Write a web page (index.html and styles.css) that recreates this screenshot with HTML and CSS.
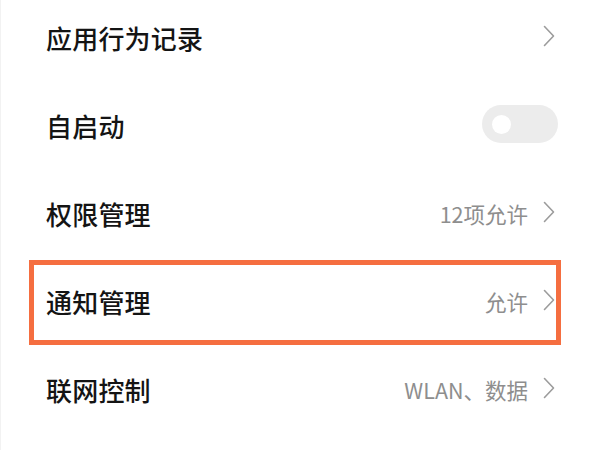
FILE: index.html
```html
<!DOCTYPE html>
<html lang="zh-CN">
<head>
<meta charset="utf-8">
<link rel="stylesheet" href="styles.css">
</head>
<body>
<div class="list">
  <div class="row">
    <span class="label">应用行为记录</span>
    <span class="right">
      <svg class="chev" viewBox="0 0 12 22" width="12" height="22"><polyline points="1.5,1.5 10.5,11 1.5,20.5"/></svg>
    </span>
  </div>
  <div class="row">
    <span class="label">自启动</span>
    <span class="right"><span class="toggle"><span class="knob"></span></span></span>
  </div>
  <div class="row">
    <span class="label">权限管理</span>
    <span class="right">
      <span class="value">12项允许</span>
      <svg class="chev" viewBox="0 0 12 22" width="12" height="22"><polyline points="1.5,1.5 10.5,11 1.5,20.5"/></svg>
    </span>
  </div>
  <div class="row highlighted">
    <span class="label">通知管理</span>
    <span class="right">
      <span class="value">允许</span>
      <svg class="chev" viewBox="0 0 12 22" width="12" height="22"><polyline points="1.5,1.5 10.5,11 1.5,20.5"/></svg>
    </span>
  </div>
  <div class="row">
    <span class="label">联网控制</span>
    <span class="right">
      <span class="value">WLAN、数据</span>
      <svg class="chev" viewBox="0 0 12 22" width="12" height="22"><polyline points="1.5,1.5 10.5,11 1.5,20.5"/></svg>
    </span>
  </div>
</div>
</body>
</html>
```

FILE: styles.css
```css
html, body {
  margin: 0;
  padding: 0;
  background: #ffffff;
}
body {
  width: 600px;
  height: 450px;
  overflow: hidden;
  font-family: "Noto Sans CJK SC", "Noto Sans", sans-serif;
  border-left: 1px solid #f2f2f2;
  box-sizing: border-box;
}
.list {
  margin-top: -4px;
  display: flex;
  flex-direction: column;
}
.row {
  position: relative;
  height: 88px;
  box-sizing: border-box;
  display: flex;
  align-items: center;
  justify-content: space-between;
  padding: 0 45px 6px 45px;
}
.label {
  font-size: 26px;
  color: #141414;
  font-weight: 500;
  letter-spacing: 0.2px;
}
.right {
  display: flex;
  align-items: center;
  gap: 15px;
}
.value {
  font-size: 21.5px;
  color: #8e8e8e;
}
.chev {
  display: block;
  margin-top: -2px;
}
.chev polyline {
  fill: none;
  stroke: #9c9c9c;
  stroke-width: 1.6;
  stroke-linecap: round;
  stroke-linejoin: round;
}
.toggle {
  display: flex;
  align-items: center;
  width: 76px;
  height: 38px;
  border-radius: 19px;
  background: #ececec;
  box-sizing: border-box;
  padding-left: 10px;
  margin-right: -3px;
  margin-top: -2px;
}
.knob {
  width: 19px;
  height: 19px;
  border-radius: 50%;
  background: #ffffff;
}
.highlighted::after {
  content: "";
  position: absolute;
  left: 28px;
  right: 39px;
  top: 0;
  height: 85px;
  border: 5px solid #f56e40;
  box-sizing: border-box;
  pointer-events: none;
}
```
